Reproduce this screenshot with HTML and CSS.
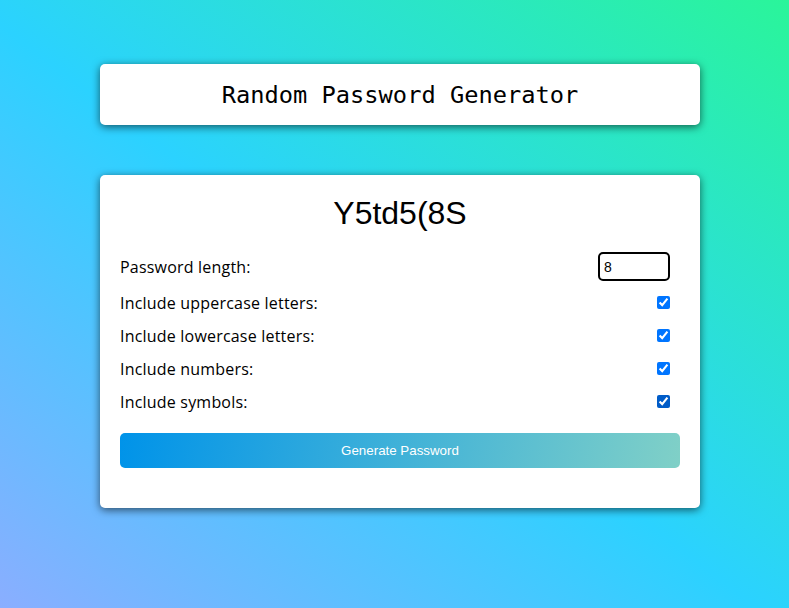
FILE: index.html
```html
<!DOCTYPE html>
<html lang="en">
<head>
<meta charset="utf-8">
<title>Random Password Generator</title>
<link rel="stylesheet" href="styles.css">
</head>
<body>
<main class="page">
  <header class="card title-card">
    <h1 class="title">Random Password Generator</h1>
  </header>
  <section class="card generator">
    <div class="password">Y5td5(8S</div>
    <div class="options">
      <div class="row">
        <label class="label" for="length">Password length:</label>
        <input class="length" id="length" type="number" value="8">
      </div>
      <div class="row">
        <label class="label" for="upper">Include uppercase letters:</label>
        <input class="check" id="upper" type="checkbox" checked>
      </div>
      <div class="row">
        <label class="label" for="lower">Include lowercase letters:</label>
        <input class="check" id="lower" type="checkbox" checked>
      </div>
      <div class="row">
        <label class="label" for="numbers">Include numbers:</label>
        <input class="check" id="numbers" type="checkbox" checked>
      </div>
      <div class="row">
        <label class="label" for="symbols">Include symbols:</label>
        <input class="check check-focus" id="symbols" type="checkbox" checked>
      </div>
    </div>
    <button class="generate" type="button">Generate Password</button>
  </section>
</main>
</body>
</html>
```
FILE: styles.css
```css
html {
  height: 100%;
  background: linear-gradient(to top right, #8aaeff 0%, #2bd2ff 48%, #2af59a 100%);
}
body {
  margin: 0;
  min-height: 100%;
}
.page {
  padding: 64px 0 40px 100px;
  display: flex;
  flex-direction: column;
  gap: 50px;
}
.card {
  width: 600px;
  box-sizing: border-box;
  background: #fff;
  border-radius: 5px;
  box-shadow: 0 2px 8px rgba(0, 0, 0, 0.6);
}
.title-card {
  height: 61px;
  display: flex;
  align-items: center;
  justify-content: center;
}
.title {
  margin: 0;
  font-family: "DejaVu Sans Mono", "Liberation Mono", monospace;
  font-size: 23.7px;
  font-weight: normal;
  color: #000;
}
.generator {
  padding: 20px 20px 40px;
}
.password {
  font-family: "Liberation Sans", Arial, sans-serif;
  font-size: 32px;
  text-align: center;
  color: #000;
  line-height: 37px;
}
.options {
  margin-top: 20px;
  display: flex;
  flex-direction: column;
  gap: 11px;
}
.row {
  display: flex;
  align-items: center;
  justify-content: space-between;
  padding-right: 10px;
}
.label {
  font-family: "Comic Sans MS", "Open Sans", sans-serif;
  font-size: 16px;
  letter-spacing: 0.2px;
  line-height: 22px;
  color: #000;
}
.length {
  box-sizing: border-box;
  width: 72px;
  height: 29px;
  margin: 0;
  border: 2px solid #000;
  border-radius: 5px;
  padding: 0 4px;
  font-family: "Liberation Sans", Arial, sans-serif;
  font-size: 14px;
  color: #000;
  outline: none;
  -moz-appearance: textfield;
}
.length::-webkit-inner-spin-button,
.length::-webkit-outer-spin-button {
  -webkit-appearance: none;
  margin: 0;
}
.check {
  width: 13px;
  height: 13px;
  margin: 0 0 1px;
  accent-color: #0075ff;
}
.check-focus {
  accent-color: #005cc8;
}
.generate {
  display: block;
  width: 100%;
  height: 35px;
  margin-top: 20px;
  border: 0;
  border-radius: 5px;
  background: linear-gradient(100deg, #0093e9 0%, #80d0c7 100%);
  color: #fff;
  font-family: "Liberation Sans", Arial, sans-serif;
  font-size: 13.333px;
}
```
